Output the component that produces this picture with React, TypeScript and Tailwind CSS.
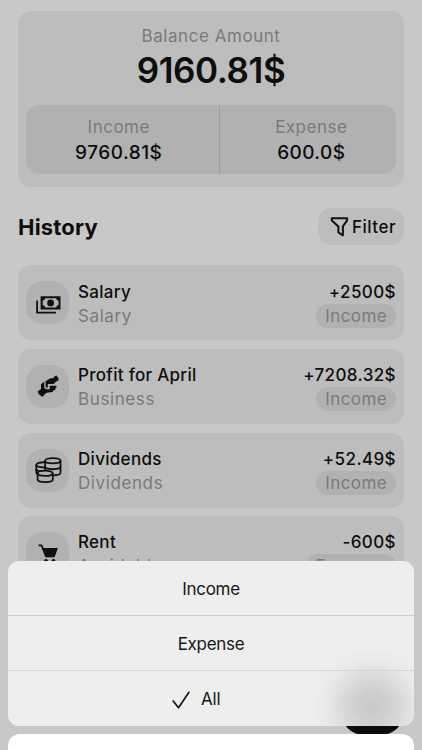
import React from "react";

type Kind = "cash" | "hands" | "coins" | "cart";

function RowIcon({ kind }: { kind: Kind }) {
  if (kind === "cash") {
    return (
      <svg className="mt-[3px]" width="26" height="26" viewBox="0 0 26 26" fill="none">
        <path fill="#101010" fillRule="evenodd" d="M5.600 5.200h19.900v13.300H5.600zM10 7.300a2.400 2.400 0 0 1-2.300 2.300v4.600a2.400 2.400 0 0 1 2.300 2.300h11.200a2.400 2.400 0 0 1 2.300-2.300V9.600a2.400 2.400 0 0 1-2.300-2.300z" />
        <circle cx="15.600" cy="11.900" r="3.400" fill="#101010" />
        <path d="M2.100 9.600v12.100h18.800" stroke="#101010" strokeWidth="1.800" />
      </svg>
    );
  }
  if (kind === "hands") {
    return (
      <svg width="26" height="26" viewBox="0 0 26 26" fill="#101010">
        <path d="M10.600 8.200 15.300 5.300h2.800l1.800-2.300 1.900-.4.700 1.500 1.100 1.400-.2 2-2.900 1.600-1.700 1.800h-6v3.300l-1 .5-1.200-.6z" />
        <path d="m2.700 18.500 3.400-2.700-.2-4.300 3.300-3v6.200l2 1.500h3.500v-3.400h6.800v1.800l-1.100.6v1.500l-2 .8-.8 1.500-4.200.6-2.300.5-3.300 3.400-1.900-.3-.6-1.200-1.600-.8z" />
      </svg>
    );
  }
  if (kind === "coins") {
    return (
      <svg width="28" height="28" viewBox="0 0 28 28" fill="#b1b1b1" stroke="#101010" strokeWidth="1.800">
        <path d="M2.300 8.800c0-3.400 15-3.400 15 0v7.600c0 3.400-15 3.400-15 0z" />
        <path fill="none" d="M2.300 8.800c0 3.400 15 3.400 15 0M2.300 12.900c0 3.400 15 3.400 15 0" />
        <path d="M11.100 4.800c0-3.500 15.400-3.500 15.400 0v12c0 3.300-15.400 3.300-15.400 0z" />
        <path fill="none" d="M11.100 4.800c0 3.500 15.400 3.500 15.400 0M11.100 10.600c0 3.500 15.400 3.500 15.400 0" />
        <path d="M3.600 17.300c0-3.500 15.200-3.500 15.200 0v6.100c0 3.500-15.200 3.500-15.200 0z" />
        <path fill="none" d="M3.600 17.300c0 3.500 15.200 3.500 15.200 0" />
      </svg>
    );
  }
  return (
    <svg width="26" height="26" viewBox="0 0 26 26" fill="#101010">
      <path d="M3.500 3.500h3.700l1.400 3.600h14.300l-3.300 9.200h-9.300L6 5.200H3.500z" />
      <circle cx="11" cy="20" r="2" />
      <circle cx="18.500" cy="20" r="2" />
    </svg>
  );
}

const rows: { kind: Kind; title: string; category: string; amount: string; type: string }[] = [
  { kind: "cash", title: "Salary", category: "Salary", amount: "+2500$", type: "Income" },
  { kind: "hands", title: "Profit for April", category: "Business", amount: "+7208.32$", type: "Income" },
  { kind: "coins", title: "Dividends", category: "Dividends", amount: "+52.49$", type: "Income" },
  { kind: "cart", title: "Rent", category: "Avoidable", amount: "-600$", type: "Expense" },
];

export default function App() {
  return (
    <div className="relative h-[750px] w-[422px] overflow-hidden bg-[#c8c8c8] px-[18px] pt-[11px] font-['Inter',sans-serif] text-[#0e0e0e]">
      <section className="h-[176px] w-[386px] rounded-[13px] bg-[#bdbdbd] px-2 pt-[14px] text-center">
        <div className="text-[17px] leading-[22px] tracking-[0.55px] text-[#7a7a7a]">Balance Amount</div>
        <div className="mt-[2px] text-[35px] font-semibold leading-[42px] tracking-[-0.400px]">9160.81$</div>
        <div className="mt-[14.300px] flex h-[69px] w-[370px] rounded-[13px] bg-[#b1b1b1]">
          <div className="w-[193.500px] border-r border-[#9c9ca0] pr-[7px] pt-[11px]">
            <div className="text-[17px] leading-[22px] tracking-[0.5px] text-[#7a7a7a]">Income</div>
            <div className="mt-1 text-[19px] font-medium leading-[22px] tracking-[0.500px]">9760.81$</div>
          </div>
          <div className="flex-1 pl-[7px] pt-[11px]">
            <div className="text-[17px] leading-[22px] tracking-[0.5px] text-[#7a7a7a]">Expense</div>
            <div className="mt-1 text-[19px] font-medium leading-[22px] tracking-[0.400px]">600.0$</div>
          </div>
        </div>
      </section>

      <div className="mt-[21px] flex h-[37px] items-center justify-between">
        <h1 className="text-[22px] font-bold leading-7 tracking-[0.200px]">History</h1>
        <button className="flex h-[37px] w-[86px] items-center rounded-[14px] bg-[#bdbdbd] pl-[12px]">
          <svg width="20" height="22" viewBox="0 0 20 22" fill="none" stroke="#101010" strokeWidth="2" strokeLinejoin="round">
            <path d="M1.800 2.200h15.300v2.200l-4.200 6v8.900l-4.500-3v-5.900l-6.600-6z" />
          </svg>
          <span className="ml-[2px] text-[17px] font-medium leading-6 tracking-[0.500px]">Filter</span>
        </button>
      </div>

      <div className="mt-[20.400px] flex flex-col gap-[8.600px]">
        {rows.map((r) => (
          <div key={r.title} className="flex h-[75px] w-[386px] items-center rounded-[13px] bg-[#bdbdbd] px-2">
            <div className="flex h-[43px] w-[43px] items-center justify-center rounded-[17px] bg-[#b1b1b1]">
              <RowIcon kind={r.kind} />
            </div>
            <div className="ml-[9px] flex-1 pt-[1.500px]">
              <div className="text-[17px] font-medium leading-[24px] tracking-[0.300px]">{r.title}</div>
              <div className="text-[17px] leading-[24px] tracking-[0.600px] text-[#7a7a7a]">{r.category}</div>
            </div>
            <div className="flex flex-col items-end pt-[1.500px]">
              <div className="text-[17px] font-medium leading-[24px] tracking-[0.400px]">{r.amount}</div>
              <div className="rounded-full bg-[#b1b1b1] px-[9px] text-[17px] leading-[24px] tracking-[0.400px] text-[#7a7a7a]">{r.type}</div>
            </div>
          </div>
        ))}
      </div>

      <div className="absolute left-[341px] top-[670px] h-[65px] w-[63px] rounded-[23px] bg-[#0c0c0c]" />

      <div className="absolute left-2 top-[561px] w-[406px]">
        <div className="h-[165px] overflow-hidden rounded-[11px] bg-[#eeeeee] bg-[radial-gradient(circle_at_364px_146px,#c9c9c9_0,#cecece_14px,#dadada_30px,#e9e9e9_46px,#eeeeee_60px)] text-[17px] text-[#161616]">
          <div className="flex h-[55px] items-center justify-center border-b border-[#cfcfcf] pt-[3px] tracking-[-0.300px]">Income</div>
          <div className="flex h-[55px] items-center justify-center border-b border-[#d5d5d5] pt-[3px] tracking-[-0.300px]">Expense</div>
          <div className="flex h-[55px] items-center pl-[163px] pt-[2px]">
            <svg width="20" height="20" viewBox="0 0 20 20" fill="none" stroke="#161616" strokeWidth="1.700" strokeLinecap="round" strokeLinejoin="round">
              <path d="m2.200 11 5.300 6.700L17.900 2.300" />
            </svg>
            <span className="ml-[10px] tracking-[-0.200px]">All</span>
          </div>
        </div>
        <div className="mt-2 h-[56px] rounded-[12px] bg-white" />
      </div>
    </div>
  );
}
